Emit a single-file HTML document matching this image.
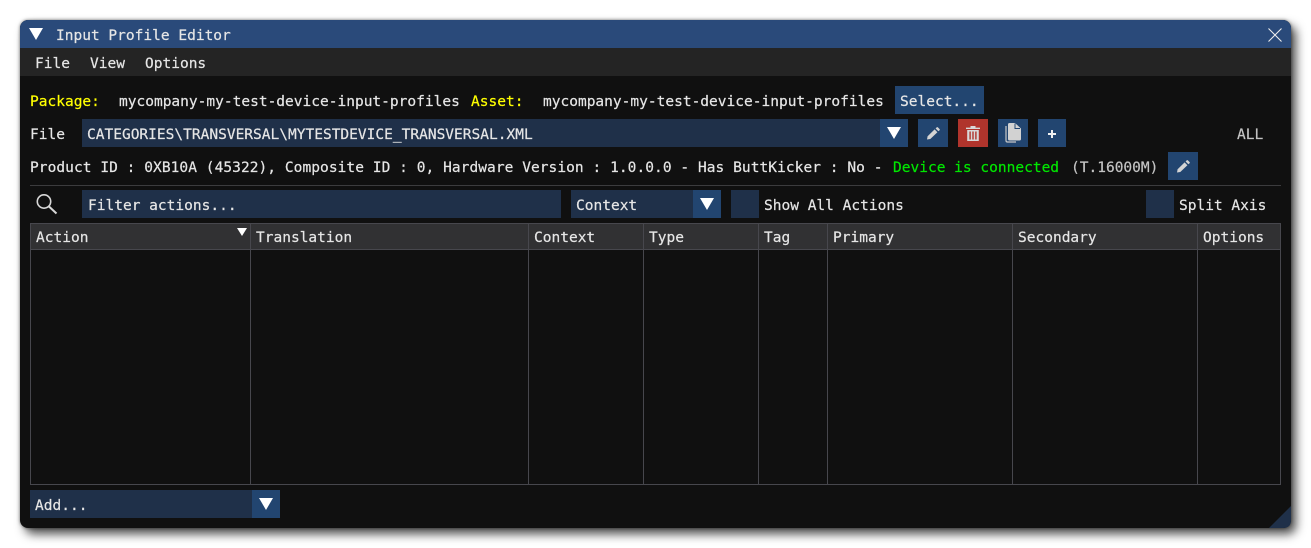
<!DOCTYPE html>
<html><head><meta charset="utf-8">
<style>
html,body{margin:0;padding:0;background:#fff;width:1311px;height:548px;overflow:hidden}
#w{position:absolute;left:20px;top:20px;width:1271px;height:508px;background:#101010;border-radius:8px;box-shadow:5px 6px 10px rgba(0,0,0,.7),0 0 3px rgba(0,0,0,.5);overflow:hidden}
#p{position:absolute;left:0;top:0;width:1311px;height:548px;font:14.53px/18px "DejaVu Sans Mono",monospace;color:#e6e6e6}
.t{position:absolute;white-space:pre;height:18px;margin-top:1px;-webkit-text-stroke:.2px currentColor}
.b{position:absolute}
.fr{background:#1f3049}
.bt{background:#224570}
.tri{position:absolute;width:0;height:0;border-left:7px solid transparent;border-right:7px solid transparent;border-top:12px solid #fff}
.c{position:absolute;top:224px;width:1px;height:261px;background:#47474d}
</style></head><body>
<div id="w"></div>
<div id="p">
<div class="b" style="left:20px;top:20px;width:1271px;height:28px;background:#2a4a7a;border-radius:8px 8px 0 0"></div>
<div class="tri" style="left:29px;top:28px"></div>
<div class="t" style="left:56px;top:26px">Input Profile Editor</div>
<svg class="b" style="left:1268px;top:28px" width="14" height="14"><path d="M.5 .5L13.5 13.5M13.5 .5L.5 13.5" stroke="#eee" stroke-width="1.1" fill="none"/></svg>
<div class="b" style="left:20px;top:48px;width:1271px;height:28px;background:#242424"></div>
<div class="t" style="left:35px;top:54px">File</div>
<div class="t" style="left:90px;top:54px">View</div>
<div class="t" style="left:145px;top:54px">Options</div>

<div class="t" style="left:30px;top:92px;color:#ffff00">Package:</div>
<div class="t" style="left:119px;top:92px">mycompany-my-test-device-input-profiles</div>
<div class="t" style="left:471px;top:92px;color:#ffff00">Asset:</div>
<div class="t" style="left:543px;top:92px">mycompany-my-test-device-input-profiles</div>
<div class="b bt" style="left:895px;top:86px;width:89px;height:28px"></div>
<div class="t" style="left:900px;top:92px">Select...</div>

<div class="t" style="left:30px;top:125px">File</div>
<div class="b fr" style="left:82px;top:119px;width:798px;height:28px"></div>
<div class="t" style="left:87px;top:125px">CATEGORIES\TRANSVERSAL\MYTESTDEVICE_TRANSVERSAL.XML</div>
<div class="b bt" style="left:880px;top:119px;width:28px;height:28px"></div>
<div class="tri" style="left:887px;top:127px"></div>
<div class="b bt" style="left:918px;top:119px;width:30px;height:28px"></div>
<svg class="b" style="left:927px;top:127px" width="14" height="13"><path d="M0 12.5L.6 9.2L7.6 2.4L10.4 5.2L3.3 12Z" fill="#d4d4d4"/><path d="M8.6 1.5L9.8 .3Q10.3 0 10.8 .3L12.6 2.1Q13 2.6 12.6 3.1L11.4 4.2Z" fill="#d4d4d4"/></svg>
<div class="b" style="left:958px;top:119px;width:30px;height:28px;background:#b0342c"></div>
<svg class="b" style="left:966px;top:126px" width="14" height="15"><path d="M0 1.6H4.5V0H9.5V1.6H14V3H0Z" fill="#d8d8d8"/><path d="M1.2 4H12.8V15H1.2ZM3.4 5.5V13.5H4.8V5.5ZM6.3 5.5V13.5H7.7V5.5ZM9.2 5.5V13.5H10.6V5.5Z" fill="#d8d8d8" fill-rule="evenodd"/></svg>
<div class="b bt" style="left:998px;top:119px;width:30px;height:28px"></div>
<svg class="b" style="left:1004px;top:122px" width="18" height="22"><path d="M2 4V18.5Q2 20 3.5 20H12" stroke="#c8c8c8" stroke-width="1.2" fill="none"/><path d="M4 2.5Q4 1 5.5 1H11L17 6.5V17Q17 18.5 15.5 18.5H5.5Q4 18.5 4 17Z" fill="#d2d2d2"/><path d="M11 1.5V6.5H16" stroke="#224570" stroke-width="1" fill="none"/></svg>
<div class="b bt" style="left:1038px;top:119px;width:28px;height:28px"></div>
<svg class="b" style="left:1047px;top:129px" width="10" height="10"><path d="M5 1V9M1 5H9" stroke="#f0f0f0" stroke-width="2"/></svg>
<div class="t" style="left:1237px;top:125px;color:#c4c4c4">ALL</div>

<div class="t" style="left:30px;top:158px;letter-spacing:.05px">Product ID : 0XB10A (45322), Composite ID : 0, Hardware Version : 1.0.0.0 - Has ButtKicker : No - </div>
<div class="t" style="left:893px;top:158px;color:#00e600">Device is connected</div>
<div class="t" style="left:1071px;top:158px;color:#c4c4c4">(T.16000M)</div>
<div class="b bt" style="left:1168px;top:152px;width:30px;height:28px"></div>
<svg class="b" style="left:1177px;top:160px" width="14" height="13"><path d="M0 12.5L.6 9.2L7.6 2.4L10.4 5.2L3.3 12Z" fill="#d4d4d4"/><path d="M8.6 1.5L9.8 .3Q10.3 0 10.8 .3L12.6 2.1Q13 2.6 12.6 3.1L11.4 4.2Z" fill="#d4d4d4"/></svg>

<div class="b" style="left:30px;top:185px;width:1251px;height:1px;background:#3c3c3e"></div>

<svg class="b" style="left:35px;top:192px" width="24" height="24"><circle cx="9" cy="9.5" r="6.7" stroke="#d8d8d8" stroke-width="1.6" fill="none"/><path d="M14 14.5L21.5 21.5" stroke="#d8d8d8" stroke-width="2" fill="none"/></svg>
<div class="b fr" style="left:82px;top:190px;width:479px;height:28px"></div>
<div class="t" style="left:88px;top:196px">Filter actions...</div>
<div class="b fr" style="left:571px;top:190px;width:122px;height:28px"></div>
<div class="t" style="left:576px;top:196px">Context</div>
<div class="b bt" style="left:693px;top:190px;width:28px;height:28px"></div>
<div class="tri" style="left:700px;top:198px"></div>
<div class="b fr" style="left:731px;top:190px;width:28px;height:28px"></div>
<div class="t" style="left:764px;top:196px">Show All Actions</div>
<div class="b fr" style="left:1146px;top:190px;width:28px;height:28px"></div>
<div class="t" style="left:1179px;top:196px">Split Axis</div>

<div class="b" style="left:30px;top:223px;width:1249px;height:260px;border:1px solid #47474d"></div>
<div class="b" style="left:31px;top:224px;width:1249px;height:25px;background:#313133"></div>
<div class="b" style="left:31px;top:249px;width:1249px;height:1px;background:#47474d"></div>
<div class="c" style="left:250px"></div>
<div class="c" style="left:528px"></div>
<div class="c" style="left:643px"></div>
<div class="c" style="left:758px"></div>
<div class="c" style="left:827px"></div>
<div class="c" style="left:1012px"></div>
<div class="c" style="left:1197px"></div>
<div class="t" style="left:36px;top:228px">Action</div>
<div class="b" style="left:237px;top:228px;width:0;height:0;border-left:5px solid transparent;border-right:5px solid transparent;border-top:8px solid #fff"></div>
<div class="t" style="left:256px;top:228px">Translation</div>
<div class="t" style="left:534px;top:228px">Context</div>
<div class="t" style="left:649px;top:228px">Type</div>
<div class="t" style="left:764px;top:228px">Tag</div>
<div class="t" style="left:833px;top:228px">Primary</div>
<div class="t" style="left:1018px;top:228px">Secondary</div>
<div class="t" style="left:1203px;top:228px">Options</div>

<div class="b fr" style="left:30px;top:490px;width:222px;height:28px"></div>
<div class="t" style="left:35px;top:496px">Add...</div>
<div class="b bt" style="left:252px;top:490px;width:28px;height:28px"></div>
<div class="tri" style="left:259px;top:498px"></div>
<svg class="b" style="left:1269px;top:506px" width="22" height="22"><path d="M0 22L22 0V14Q22 22 14 22Z" fill="#1f3049"/></svg>
</div>
</body></html>
